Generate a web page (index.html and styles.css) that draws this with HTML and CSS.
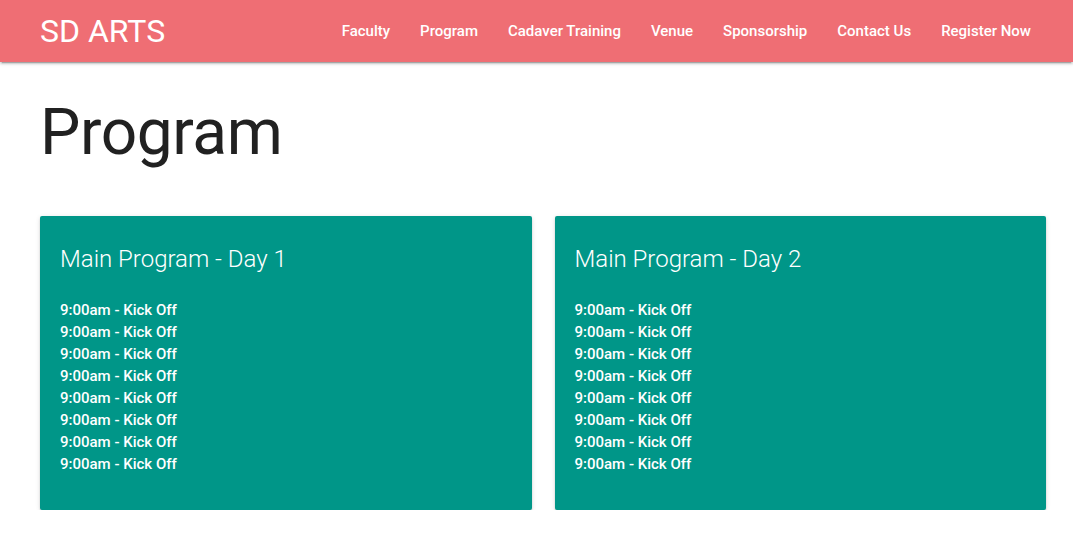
FILE: index.html
```html
<!DOCTYPE html>
<html lang="en">
<head>
<meta charset="utf-8">
<title>SD ARTS - Program</title>
<link rel="stylesheet" href="styles.css">
</head>
<body>
<nav class="navbar">
  <div class="nav-wrap">
    <a class="brand" href="#">SD ARTS</a>
    <ul class="nav-links">
      <li><a href="#">Faculty</a></li>
      <li><a href="#">Program</a></li>
      <li><a href="#">Cadaver Training</a></li>
      <li><a href="#">Venue</a></li>
      <li><a href="#">Sponsorship</a></li>
      <li><a href="#">Contact Us</a></li>
      <li><a href="#">Register Now</a></li>
    </ul>
  </div>
</nav>
<main class="container">
  <h1 class="page-title">Program</h1>
  <div class="cards">
    <section class="card">
      <h2 class="card-title">Main Program - Day 1</h2>
      <ul class="schedule">
        <li>9:00am - Kick Off</li>
        <li>9:00am - Kick Off</li>
        <li>9:00am - Kick Off</li>
        <li>9:00am - Kick Off</li>
        <li>9:00am - Kick Off</li>
        <li>9:00am - Kick Off</li>
        <li>9:00am - Kick Off</li>
        <li>9:00am - Kick Off</li>
      </ul>
    </section>
    <section class="card">
      <h2 class="card-title">Main Program - Day 2</h2>
      <ul class="schedule">
        <li>9:00am - Kick Off</li>
        <li>9:00am - Kick Off</li>
        <li>9:00am - Kick Off</li>
        <li>9:00am - Kick Off</li>
        <li>9:00am - Kick Off</li>
        <li>9:00am - Kick Off</li>
        <li>9:00am - Kick Off</li>
        <li>9:00am - Kick Off</li>
      </ul>
    </section>
  </div>
</main>
</body>
</html>
```
FILE: styles.css
```css
* { box-sizing: border-box; }
html, body { margin: 0; padding: 0; }
body {
  font-family: Roboto, "Liberation Sans", sans-serif;
  color: #212121;
  background: #fff;
}
a { text-decoration: none; color: inherit; }
ul { list-style: none; margin: 0; padding: 0; }

.navbar {
  background: #ef6e74;
  height: 62px;
  box-shadow: 0 2px 2px 0 rgba(0,0,0,0.14), 0 1px 5px 0 rgba(0,0,0,0.12), 0 3px 1px -2px rgba(0,0,0,0.2);
  position: relative;
  z-index: 1;
}
.nav-wrap {
  height: 100%;
  display: flex;
  align-items: center;
  justify-content: space-between;
  padding: 0 27px 0 40px;
}
.brand {
  color: #fff;
  font-size: 32px;
  line-height: 62px;
}
.nav-links {
  display: flex;
  height: 100%;
}
.nav-links li a {
  display: block;
  padding: 0 15px;
  line-height: 62px;
  color: #fff;
  font-size: 15px;
  font-weight: 500;
}

.container {
  padding: 0 27px 0 40px;
}
.page-title {
  font-size: 64px;
  font-weight: 400;
  line-height: 70px;
  margin: 36px 0 48px;
  letter-spacing: -0.4px;
}
.cards {
  display: grid;
  grid-template-columns: 1fr 1fr;
  gap: 23px;
}
.card {
  background: #009688;
  color: #fff;
  border-radius: 2px;
  padding: 27px 20px 36px;
  box-shadow: 0 2px 2px 0 rgba(0,0,0,0.14), 0 1px 5px 0 rgba(0,0,0,0.12), 0 3px 1px -2px rgba(0,0,0,0.2);
  height: 294px;
}
.card-title {
  font-size: 24px;
  font-weight: 300;
  line-height: 32px;
  margin: 0 0 24px;
}
.schedule li {
  font-size: 15px;
  font-weight: 500;
  line-height: 22px;
}
```
